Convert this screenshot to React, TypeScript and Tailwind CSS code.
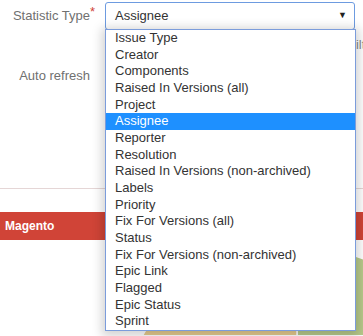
import React from 'react'

const options = [
    'Issue Type',
    'Creator',
    'Components',
    'Raised In Versions (all)',
    'Project',
    'Assignee',
    'Reporter',
    'Resolution',
    'Raised In Versions (non-archived)',
    'Labels',
    'Priority',
    'Fix For Versions (all)',
    'Status',
    'Fix For Versions (non-archived)',
    'Epic Link',
    'Flagged',
    'Epic Status',
    'Sprint',
]

const selected = 'Assignee'

const PieChart = () => {
    // big pie, only the top slices show at the bottom of the gadget
    const cx = 297
    const cy = 425
    const r = 178
    const pt = (deg: number) => {
        const a = (deg * Math.PI) / 180
        return `${cx + r * Math.sin(a)} ${cy - r * Math.cos(a)}`
    }
    return (
        <svg width="363" height="95" viewBox="0 241 363 95" className="block">
            <path d={`M${cx} ${cy} L${pt(0)} A${r} ${r} 0 0 1 ${pt(120)} Z`} fill="#b8ca8b" stroke="#fff" strokeWidth="1.5" />
            <path d={`M${cx} ${cy} L${pt(-110)} A${r} ${r} 0 0 1 ${pt(0)} Z`} fill="#e6cb8e" stroke="#fff" strokeWidth="1.5" />
        </svg>
    )
}

export default function App() {
    return (
        <div className="relative w-[363px] h-[336px] overflow-hidden bg-white font-['Liberation_Sans',Arial,sans-serif]">
            {/* form rows under the open select */}
            <div className="flex items-center h-[30px] pt-[1px]">
                <label className="w-[90px] text-right text-[13px] text-[#707070] relative">
                    Statistic Type
                    <span className="absolute -right-[5px] -top-[4px] text-[#d04437] text-[13px]">*</span>
                </label>
                <div className="ml-[15px] w-[250px] h-[28px] border border-[#6d9be0] rounded-[3px] bg-white flex items-center justify-between pl-[9px] pr-[7px] text-[13px] text-[#333]">
                    <span>{selected}</span>
                    <span className="text-[9px] text-[#222]">▼</span>
                </div>
            </div>
            <div className="h-[30px] flex items-center pl-[348px] text-[13px] text-[#8a8a8a] whitespace-nowrap">
                Filter
            </div>
            <div className="h-[32px] flex items-center">
                <span className="w-[90px] text-right text-[13px] text-[#707070]">Auto refresh</span>
            </div>
            <div className="h-[96px]" />
            <div className="h-px bg-[#e5d6d6]" />
            <div className="h-[23px]" />
            <div className="h-[28px] bg-[#d04437] flex items-center pl-[5px] text-[12px] font-bold text-white">
                Magento
            </div>
            <PieChart />

            {/* open dropdown list */}
            <div className="absolute left-[105px] top-[29px] w-[251px] border border-[#7b9cdb] bg-white shadow-[0_2px_10px_3px_rgba(0,0,0,0.18)]">
                {options.map((opt) => (
                    <div
                        key={opt}
                        className={`h-[16.66px] leading-[16.66px] pl-[9px] text-[13px] whitespace-nowrap ${
                            opt === selected ? 'bg-[#1e90ff] text-white' : 'text-[#333]'
                        }`}
                    >
                        {opt}
                    </div>
                ))}
            </div>
        </div>
    )
}
